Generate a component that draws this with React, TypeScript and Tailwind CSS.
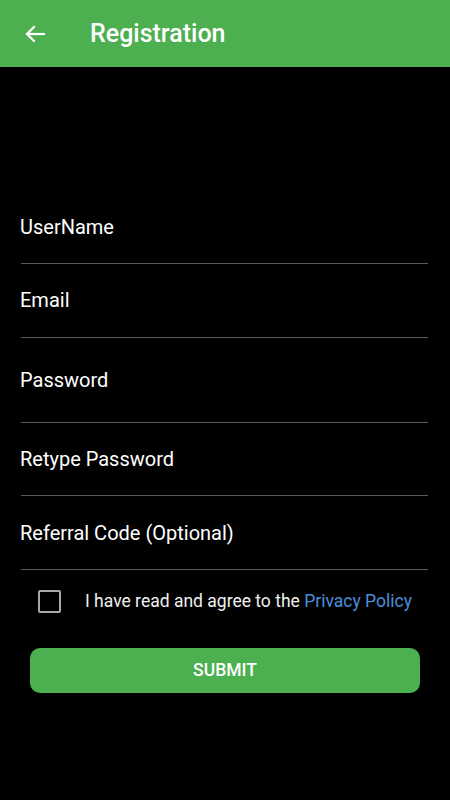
import React from "react";

const fields = [
  { label: "UserName", cls: "pt-[24px] pb-[24px]" },
  { label: "Email", cls: "pt-[24px] pb-[25px]" },
  { label: "Password", cls: "pt-[30px] pb-[30px]" },
  { label: "Retype Password", cls: "pt-[24px] pb-[24px]" },
  { label: "Referral Code (Optional)", cls: "pt-[25px] pb-[24px]" },
];

export default function App() {
  return (
    <div
      className="w-[450px] h-[800px] bg-black text-white overflow-hidden"
      style={{ fontFamily: "Roboto, 'Noto Sans', sans-serif" }}
    >
      <div className="h-[67px] bg-[#4CAF50] flex items-center">
        <svg
          className="ml-[23px]"
          width="24"
          height="24"
          viewBox="0 0 24 24"
          fill="none"
          stroke="white"
          strokeWidth="2.2"
          strokeLinecap="square"
        >
          <path d="M21 12H4" />
          <path d="M11 5l-7 7 7 7" />
        </svg>
        <span className="ml-[43px] text-[25px] font-medium leading-none">
          Registration
        </span>
      </div>

      <div className="pt-[124px] pl-[20px] w-[428px]">
        {fields.map((f) => (
          <div key={f.label}>
            <div className={`${f.cls} text-[20px] leading-[24px]`}>{f.label}</div>
            <div className="ml-[1px] h-px bg-[#5a5a5a]" />
          </div>
        ))}
      </div>

      <div className="flex items-center mt-[19px] h-[24px]">
        <div className="ml-[38px] w-[23px] h-[23px] border-2 border-[#a8a8a8] rounded-[2px]" />
        <div className="ml-[24px] text-[17.5px] leading-[24px] text-[#f0f0f0]">
          I have read and agree to the <span className="text-[#4A8FDB]">Privacy Policy</span>
        </div>
      </div>

      <div className="mt-[35px] mx-[30px] h-[45px] rounded-[10px] bg-[#4CAF50] flex items-center justify-center text-[17.5px] font-medium">
        SUBMIT
      </div>
    </div>
  );
}
